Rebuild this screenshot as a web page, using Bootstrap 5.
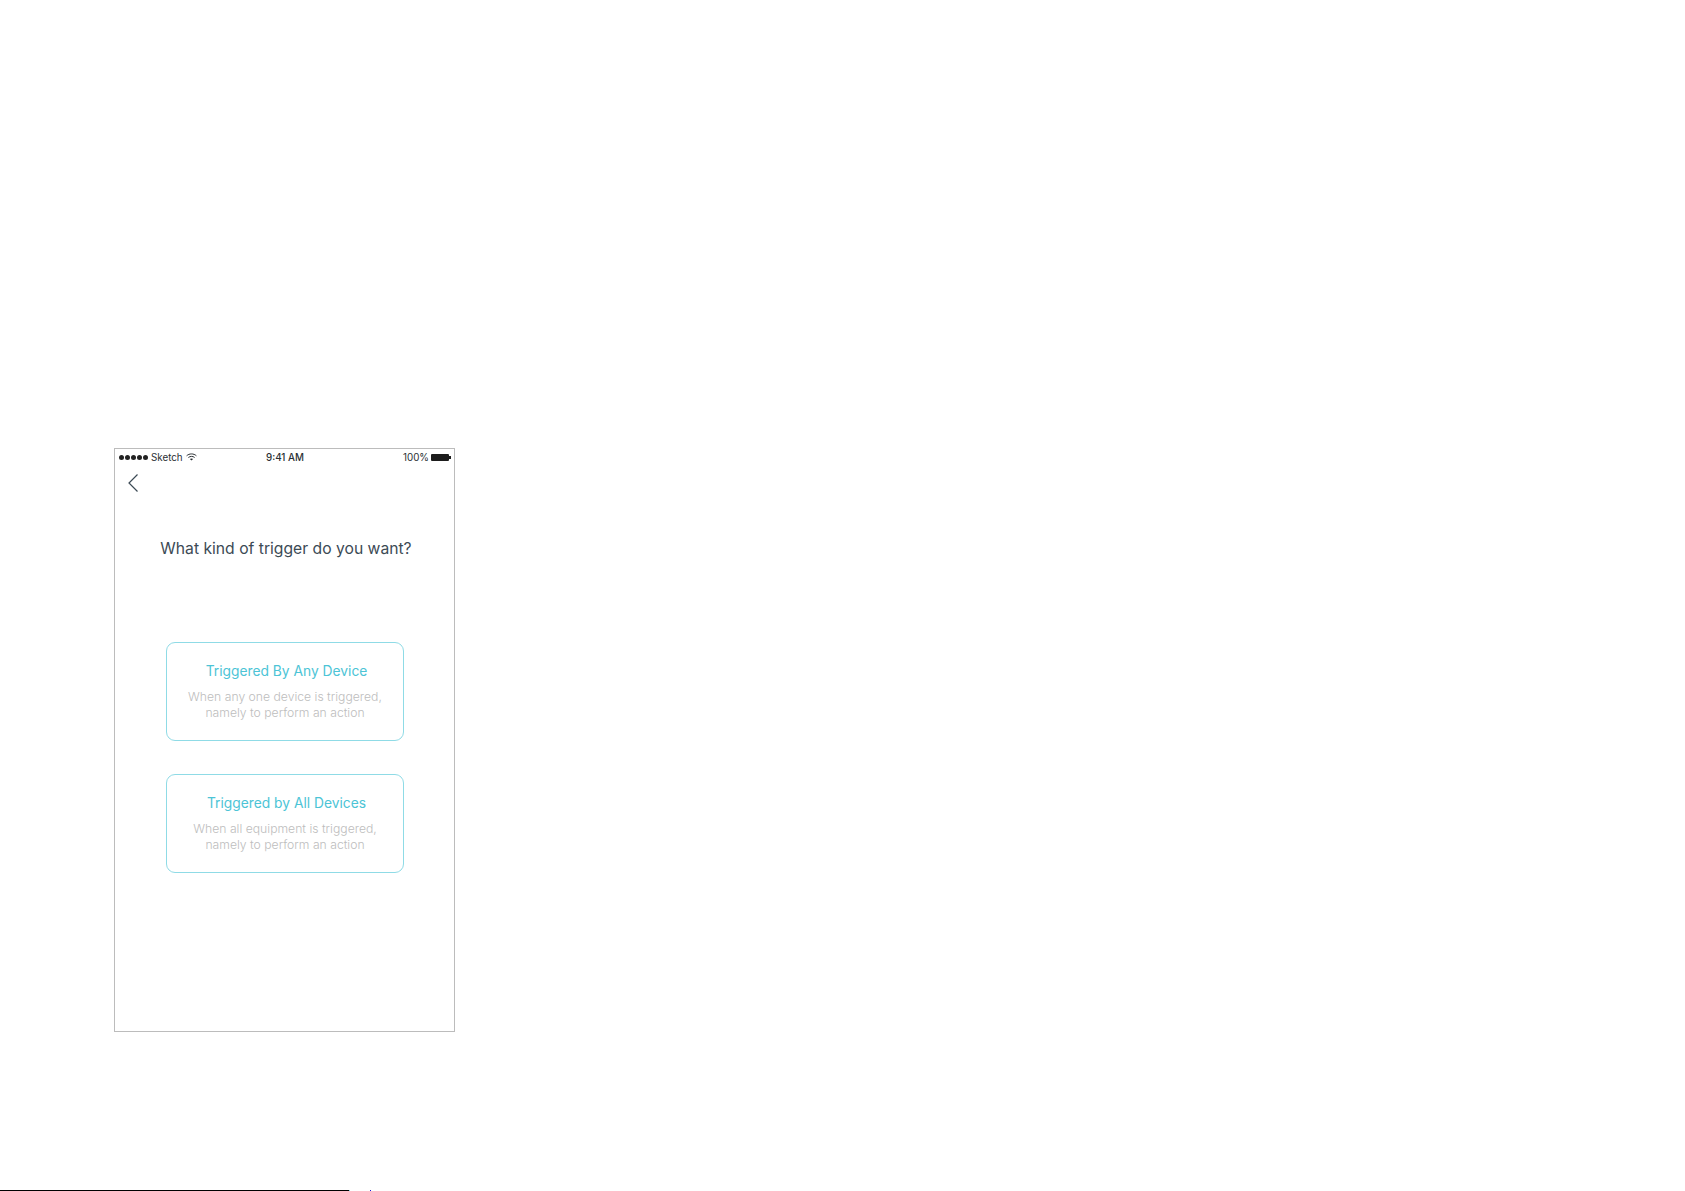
<!DOCTYPE html>
<html lang="en">
<head>
<meta charset="utf-8">
<title>Trigger type</title>
<link rel="stylesheet" href="https://cdn.jsdelivr.net/npm/bootstrap@5.3.0/dist/css/bootstrap.min.css">
<style>
html,body{height:1191px;overflow:hidden;background:#fff;}
body{font-family:"Inter","Liberation Sans",sans-serif;}
.sheet{height:1191px;padding-top:448px;}
.phone{width:341px;height:584px;margin-left:114px;border:1px solid #bcbcbc;}
.statusbar{height:15px;padding:1px 3px 0 4px;font-size:9.8px;line-height:15px;color:#2a2f33;}
.status-side{width:120px;}
.clock{font-weight:500;}
.dots{gap:1px;}
.dots i{display:block;width:5px;height:5px;border-radius:50%;background:#222;}
.sketch-label{margin:0 3px 0 3px;}
.batt{width:18px;height:7px;background:#1c1c1c;border-radius:1px;}
.batt-tip{width:2px;height:3px;background:#1c1c1c;}
.pct{margin-right:2px;}
.backbtn{margin:9px 0 0 12px;height:20px;}
.question{margin:44px 0 0 3px;font-size:15.7px;font-weight:400;line-height:24px;color:#3c4a55;text-align:center;}
.choices{margin:81px 0 0 51px;width:238px;gap:33px;}
.choice{height:99px;border:1px solid #8fdbe6;border-radius:9px;padding-top:19px;text-align:center;background:#fff;}
.choice-title{font-size:13.8px;line-height:18px;color:#4cc4d6;margin:0 0 0 3px;}
.choice-text{font-size:12.2px;line-height:15.5px;font-weight:300;color:#bdbdbd;margin:9px 0 0;}
.footstrip{height:1px;margin-top:158px;}
.footstrip b{display:block;height:1px;width:349px;background:#000;}
.footstrip u{display:block;height:1px;width:1px;}
.tick-a{background:#7fd8e6;}
.tick-b{background:#1a1ae0;margin-left:20px;}
</style>
</head>
<body>
<div class="sheet">
  <div class="phone d-flex flex-column">
    <div class="statusbar d-flex justify-content-between align-items-center">
      <div class="status-side d-flex align-items-center">
        <span class="dots d-flex"><i></i><i></i><i></i><i></i><i></i></span>
        <span class="sketch-label">Sketch</span>
        <svg width="11" height="8" viewBox="0 0 11 8" fill="none" stroke="#2a2f33" stroke-width="1"><path d="M.6 2.8C3.4.3 7.6.3 10.4 2.8"/><path d="M2.4 4.5C4.2 3 6.8 3 8.6 4.5"/><path d="M5.5 7.6 3.9 6c.9-.7 2.3-.7 3.2 0z" fill="#2a2f33" stroke="none"/></svg>
      </div>
      <div class="clock">9:41 AM</div>
      <div class="status-side d-flex align-items-center justify-content-end">
        <span class="pct">100%</span><span class="batt"></span><span class="batt-tip"></span>
      </div>
    </div>
    <div class="backbtn">
      <svg width="12" height="20" viewBox="0 0 12 20" fill="none" stroke="#3c4a55" stroke-width="1.2" class="d-block"><path d="M10.5 1.5 2 10l8.5 8.5"/></svg>
    </div>
    <h1 class="question">What kind of trigger do you want?</h1>
    <div class="choices d-flex flex-column">
      <div class="choice">
        <p class="choice-title">Triggered By Any Device</p>
        <p class="choice-text">When any one device is triggered,<br>namely to perform an action</p>
      </div>
      <div class="choice">
        <p class="choice-title">Triggered by All Devices</p>
        <p class="choice-text">When all equipment is triggered,<br>namely to perform an action</p>
      </div>
    </div>
  </div>
  <div class="footstrip d-flex"><b></b><u class="tick-a"></u><u class="tick-b"></u></div>
</div>
<script src="https://cdn.jsdelivr.net/npm/bootstrap@5.3.0/dist/js/bootstrap.bundle.min.js"></script>
</body>
</html>
